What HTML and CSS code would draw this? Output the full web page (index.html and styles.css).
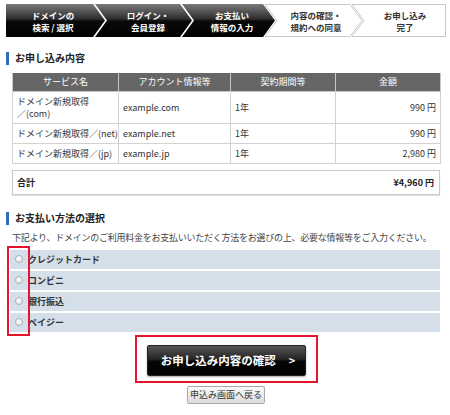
FILE: index.html
```html
<!DOCTYPE html>
<html lang="ja">
<head>
    <meta charset="UTF-8">
    <title>お支払い方法の選択</title>
    <link rel="stylesheet" href="styles.css">
</head>
<body>
    <div class="page">
        <div class="steps">
            <svg class="steps-bg" width="440" height="33" viewBox="0 0 440 33">
                <defs>
                    <linearGradient id="dark" x1="0" y1="0" x2="0" y2="33" gradientUnits="userSpaceOnUse">
                        <stop offset="0" stop-color="#7a7a7a"/>
                        <stop offset="0.45" stop-color="#2e2e2e"/>
                        <stop offset="0.52" stop-color="#0a0a0a"/>
                        <stop offset="1" stop-color="#000"/>
                    </linearGradient>
                </defs>
                <polygon points="259,0.5 344,0.5 356,16.5 344,32.5 259,32.5 271,16.5" fill="#fff" stroke="#c8c8c8"/>
                <polygon points="346,0.5 439.5,0.5 439.5,32.5 346,32.5 358,16.5" fill="#fff" stroke="#c8c8c8"/>
                <polygon points="0,0 87,0 99,16.5 87,33 0,33" fill="url(#dark)"/>
                <polygon points="89,0 174,0 186,16.5 174,33 89,33 101,16.5" fill="url(#dark)"/>
                <polygon points="176,0 257,0 269,16.5 257,33 176,33 188,16.5" fill="url(#dark)"/>
            </svg>
            <div class="step done" style="width: 94px">ドメインの<br>検索 / 選択</div>
            <div class="step done" style="width: 96px">ログイン・<br>会員登録</div>
            <div class="step done" style="width: 72px">お支払い<br>情報の入力</div>
            <div class="step" style="width: 96px">内容の確認・<br>規約への同意</div>
            <div class="step" style="width: 82px">お申し込み<br>完了</div>
        </div>

        <h2 class="heading">お申し込み内容</h2>

        <table class="order">
            <thead>
                <tr>
                    <th class="col-service">サービス名</th>
                    <th class="col-account">アカウント情報等</th>
                    <th class="col-term">契約期間等</th>
                    <th class="col-price">金額</th>
                </tr>
            </thead>
            <tbody>
                <tr>
                    <td>ドメイン新規取得<br>／(com)</td>
                    <td>example.com</td>
                    <td>1年</td>
                    <td class="price">990 円</td>
                </tr>
                <tr>
                    <td class="nowrap">ドメイン新規取得／(net)</td>
                    <td>example.net</td>
                    <td>1年</td>
                    <td class="price">990 円</td>
                </tr>
                <tr>
                    <td class="nowrap">ドメイン新規取得／(jp)</td>
                    <td>example.jp</td>
                    <td>1年</td>
                    <td class="price">2,980 円</td>
                </tr>
            </tbody>
        </table>

        <div class="total">
            <span>合計</span>
            <span>¥4,960 円</span>
        </div>

        <h2 class="heading heading-pay">お支払い方法の選択</h2>
        <p class="note">下記より、ドメインのご利用料金をお支払いいただく方法をお選びの上、必要な情報等をご入力ください。</p>

        <div class="methods">
            <label class="method"><span class="radio"></span>クレジットカード</label>
            <label class="method"><span class="radio"></span>コンビニ</label>
            <label class="method"><span class="radio"></span>銀行振込</label>
            <label class="method"><span class="radio"></span>ペイジー</label>
            <div class="mark mark-radios"></div>
        </div>

        <div class="actions">
            <div class="mark-box">
                <button class="confirm-btn">お申し込み内容の確認<span class="arrow">&gt;</span></button>
            </div>
            <button class="back-btn">申込み画面へ戻る</button>
        </div>
    </div>
</body>
</html>
```

FILE: styles.css
```css
* {
    margin: 0;
    padding: 0;
    box-sizing: border-box;
}

body {
    font-family: "Noto Sans CJK JP", "Liberation Sans", sans-serif;
    font-size: 9px;
    color: #333;
    background: #fff;
    width: 450px;
    height: 415px;
    overflow: hidden;
}

.page {
    padding: 4px 4px 0 6px;
}

/* step bar */
.steps {
    position: relative;
    display: flex;
    width: 440px;
    height: 33px;
}

.steps-bg {
    position: absolute;
    left: 0;
    top: 0;
}

.step {
    position: relative;
    display: flex;
    align-items: center;
    justify-content: center;
    text-align: center;
    font-size: 8.5px;
    font-weight: bold;
    line-height: 12px;
    color: #333;
}

.step.done {
    color: #fff;
}

/* headings */
.heading {
    position: relative;
    margin-top: 14px;
    padding-left: 9px;
    font-size: 10px;
    line-height: 14px;
    font-weight: bold;
    color: #222;
}

.heading::before {
    content: "";
    position: absolute;
    left: 0;
    top: 1px;
    width: 3px;
    height: 13px;
    background: #2f6db5;
}

.heading-pay {
    margin-top: 16px;
}

/* order table */
.order {
    margin: 8px 0 0 6px;
    width: 428px;
    border-collapse: collapse;
    table-layout: fixed;
}

.order th {
    background: #666;
    color: #fff;
    font-weight: normal;
    height: 18px;
    border: 1px solid #c8c8c8;
    border-top: none;
    line-height: 12px;
}

.order td {
    border: 1px solid #d2d2d2;
    padding: 4px 4px 3px 4px;
    line-height: 12px;
    vertical-align: middle;
}

.col-service { width: 106px; }
.col-account { width: 112px; }
.col-term { width: 105px; }
.col-price { width: 105px; }

.order td.price {
    text-align: right;
}

.nowrap {
    white-space: nowrap;
}

/* total */
.total {
    display: flex;
    justify-content: space-between;
    align-items: center;
    margin: 6px 0 0 6px;
    width: 428px;
    height: 25px;
    padding: 0 5px 0 4px;
    border: 1px solid #c8c8c8;
    box-shadow: 0 1px 1px #e4e4e4;
    font-weight: bold;
    color: #222;
}

.note {
    margin: 7px 0 0 6px;
    line-height: 12px;
    color: #444;
    letter-spacing: -0.25px;
    white-space: nowrap;
}

/* payment methods */
.methods {
    position: relative;
    display: flex;
    flex-direction: column;
    gap: 2px;
    margin: 6px 0 0 4px;
    width: 430px;
}

.method {
    display: flex;
    align-items: center;
    gap: 5px;
    height: 19px;
    padding-left: 5px;
    background: #d4dfea;
    font-weight: bold;
    color: #333;
}

.radio {
    width: 8px;
    height: 8px;
    border-radius: 50%;
    border: 1px solid #b0b0b0;
    background: radial-gradient(circle at 40% 35%, #fff, #ddd);
}

.mark {
    position: absolute;
    border: 2px solid #e5132b;
}

.mark-radios {
    left: -3px;
    top: -4px;
    width: 23px;
    height: 90px;
}

/* buttons */
.actions {
    display: flex;
    flex-direction: column;
    align-items: center;
    margin-top: 3px;
}

.mark-box {
    border: 2px solid #e5132b;
    padding: 8px 10px 5px 10px;
    width: 183px;
    height: 48px;
}

.confirm-btn {
    display: flex;
    align-items: center;
    justify-content: center;
    width: 159px;
    height: 31px;
    border: 1px solid #222;
    border-radius: 2px;
    background: linear-gradient(#555 0%, #222 48%, #050505 52%, #000 100%);
    box-shadow: 0 1px 2px rgba(0, 0, 0, 0.35);
    color: #fff;
    font-family: inherit;
    font-size: 11.5px;
    font-weight: bold;
    padding-left: 4px;
}

.confirm-btn .arrow {
    margin-left: 13px;
    font-size: 11px;
}

.back-btn {
    margin-top: 3px;
    height: 18px;
    padding: 0 2px;
    border: 1px solid #a8a8a8;
    border-radius: 2px;
    background: linear-gradient(#fafafa, #dcdcdc);
    font-family: inherit;
    font-size: 9px;
    color: #333;
}
```
